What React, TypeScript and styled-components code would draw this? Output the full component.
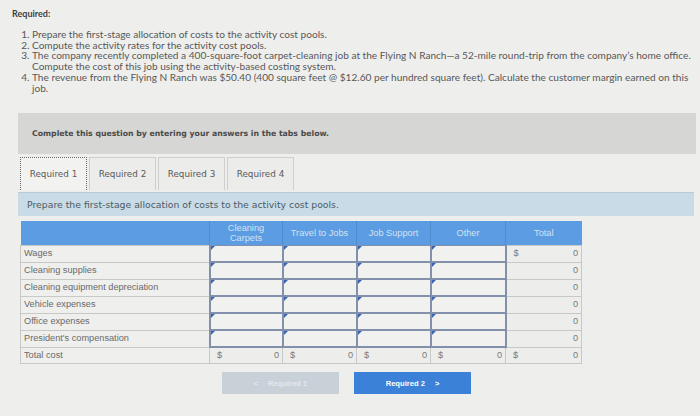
import React from 'react';
import styled, { createGlobalStyle } from 'styled-components';

const GlobalStyle = createGlobalStyle`
  html, body {
    margin: 0;
    padding: 0;
    background: #eeeeec;
  }
  body {
    width: 700px;
    height: 416px;
    overflow: hidden;
  }
`;

const Page = styled.div`
  padding: 8px 0 0 12px;
  color: #4a4a4a;
`;

const Heading = styled.div`
  font-family: 'Lato', 'Open Sans', sans-serif;
  font-size: 9px;
  font-weight: 700;
  color: #3e3e3e;
  line-height: 12px;
`;

const Steps = styled.ol`
  margin: 9px 0 0 0;
  padding: 0 0 0 20px;
  font-family: 'Lato', 'Open Sans', sans-serif;
  font-size: 10.1px;
  line-height: 10.7px;
  color: #585858;
  white-space: nowrap;
`;

const QuestionBar = styled.div`
  margin: 20px 4px 0 6px;
  height: 41px;
  background: #d6d6d4;
  display: flex;
  align-items: center;
  padding-left: 14px;
  font-family: 'DejaVu Sans', 'Verdana', sans-serif;
  font-size: 7.75px;
  font-weight: 700;
  color: #4a4a4a;
`;

const TabRow = styled.div`
  display: flex;
  gap: 2px;
  margin: 3px 0 0 8px;
`;

const Tab = styled.div<{ $active?: boolean }>`
  width: 67px;
  height: 33px;
  box-sizing: border-box;
  display: flex;
  align-items: center;
  justify-content: center;
  font-family: 'DejaVu Sans', 'Verdana', sans-serif;
  font-size: 8.8px;
  color: #5a5a5a;
  background: ${p => (p.$active ? '#f2f2f0' : '#ececea')};
  border: ${p => (p.$active ? '1px dotted #6a6a6a' : '1px solid #cfcfcd')};
  border-bottom: none;
`;

const InfoBar = styled.div`
  margin: 2px 6px 0 6px;
  height: 24px;
  background: #c9dbe6;
  border-top: 1px solid #b7cbd8;
  box-sizing: border-box;
  display: flex;
  align-items: center;
  padding-left: 9px;
  font-family: 'DejaVu Sans', 'Verdana', sans-serif;
  font-size: 9.3px;
  color: #4d5a63;
`;

const Table = styled.table`
  margin: 5px 0 0 8px;
  border-collapse: collapse;
  table-layout: fixed;
  width: 561px;
  font-family: 'Liberation Sans', Arial, sans-serif;
  font-size: 9.2px;
`;

const HeadCell = styled.th`
  background: #5c9ce2;
  height: 24px;
  padding: 0;
  font-weight: 400;
  color: #d3e2f3;
  line-height: 10px;
  border-left: 1px solid #4f8bcf;
  text-align: center;
  &:first-child {
    border-left: none;
  }
`;

const LabelCell = styled.td`
  height: 15px;
  padding: 0 0 0 3px;
  border: 1px solid #c8c8c6;
  background: #efefed;
  color: #6a6a6a;
  white-space: nowrap;
  line-height: 15px;
`;

const InputCell = styled.td`
  position: relative;
  height: 15px;
  padding: 0;
  background: #f1f1ef;
  border: 2px solid #8390ac;
  border-top-width: 1px;
  &::before {
    content: '';
    position: absolute;
    left: 0;
    top: 0;
    width: 0;
    height: 0;
    border-top: 4px solid #3c64b4;
    border-right: 4px solid transparent;
  }
`;

const ValueCell = styled.td`
  height: 15px;
  padding: 0 3px;
  border: 1px solid #c8c8c6;
  background: #ededeb;
  color: #7a7a7a;
  line-height: 15px;
`;

const Amount = styled.div`
  display: flex;
  justify-content: space-between;
  padding-left: 4px;
`;

const ButtonRow = styled.div`
  display: flex;
  gap: 15px;
  margin: 8px 0 0 210px;
`;

const NavButton = styled.div<{ $primary?: boolean }>`
  width: 117px;
  height: 22px;
  display: flex;
  align-items: center;
  justify-content: center;
  gap: 10px;
  font-family: 'Liberation Sans', Arial, sans-serif;
  font-size: 7.6px;
  font-weight: 700;
  color: ${p => (p.$primary ? '#ffffff' : '#e3e8ee')};
  background: ${p => (p.$primary ? '#3a81d7' : '#c8d0d8')};
`;

const rows = [
  'Wages',
  'Cleaning supplies',
  'Cleaning equipment depreciation',
  'Vehicle expenses',
  'Office expenses',
  "President's compensation",
];

const columns = ['Cleaning\nCarpets', 'Travel to Jobs', 'Job Support', 'Other', 'Total'];
const widths = [189, 73, 74, 74, 75, 76];

const App: React.FC = () => {
  return (
    <>
      <GlobalStyle />
      <Page>
        <Heading>Required:</Heading>
        <Steps>
          <li>Prepare the first-stage allocation of costs to the activity cost pools.</li>
          <li>Compute the activity rates for the activity cost pools.</li>
          <li>
            The company recently completed a 400-square-foot carpet-cleaning job at the Flying N Ranch—a 52-mile
            round-trip from the company’s home office.
            <br />
            Compute the cost of this job using the activity-based costing system.
          </li>
          <li>
            The revenue from the Flying N Ranch was $50.40 (400 square feet @ $12.60 per hundred square feet).
            Calculate the customer margin earned on this
            <br />
            job.
          </li>
        </Steps>
        <QuestionBar>Complete this question by entering your answers in the tabs below.</QuestionBar>
        <TabRow>
          <Tab $active>Required 1</Tab>
          <Tab>Required 2</Tab>
          <Tab>Required 3</Tab>
          <Tab>Required 4</Tab>
        </TabRow>
        <InfoBar>Prepare the first-stage allocation of costs to the activity cost pools.</InfoBar>
        <Table>
          <colgroup>
            {widths.map((w, i) => (
              <col key={i} style={{ width: w }} />
            ))}
          </colgroup>
          <thead>
            <tr>
              <HeadCell />
              {columns.map(c => (
                <HeadCell key={c}>
                  {c.split('\n').map((part, i) => (
                    <div key={i}>{part}</div>
                  ))}
                </HeadCell>
              ))}
            </tr>
          </thead>
          <tbody>
            {rows.map((r, i) => (
              <tr key={r}>
                <LabelCell>{r}</LabelCell>
                <InputCell />
                <InputCell />
                <InputCell />
                <InputCell />
                <ValueCell>
                  <Amount>
                    <span>{i === 0 ? '$' : ''}</span>
                    <span>0</span>
                  </Amount>
                </ValueCell>
              </tr>
            ))}
            <tr>
              <LabelCell>Total cost</LabelCell>
              {[0, 1, 2, 3, 4].map(i => (
                <ValueCell key={i}>
                  <Amount>
                    <span>$</span>
                    <span>0</span>
                  </Amount>
                </ValueCell>
              ))}
            </tr>
          </tbody>
        </Table>
        <ButtonRow>
          <NavButton>
            <span>&lt;</span>
            <span>Required 1</span>
          </NavButton>
          <NavButton $primary>
            <span>Required 2</span>
            <span>&gt;</span>
          </NavButton>
        </ButtonRow>
      </Page>
    </>
  );
};

export default App;
